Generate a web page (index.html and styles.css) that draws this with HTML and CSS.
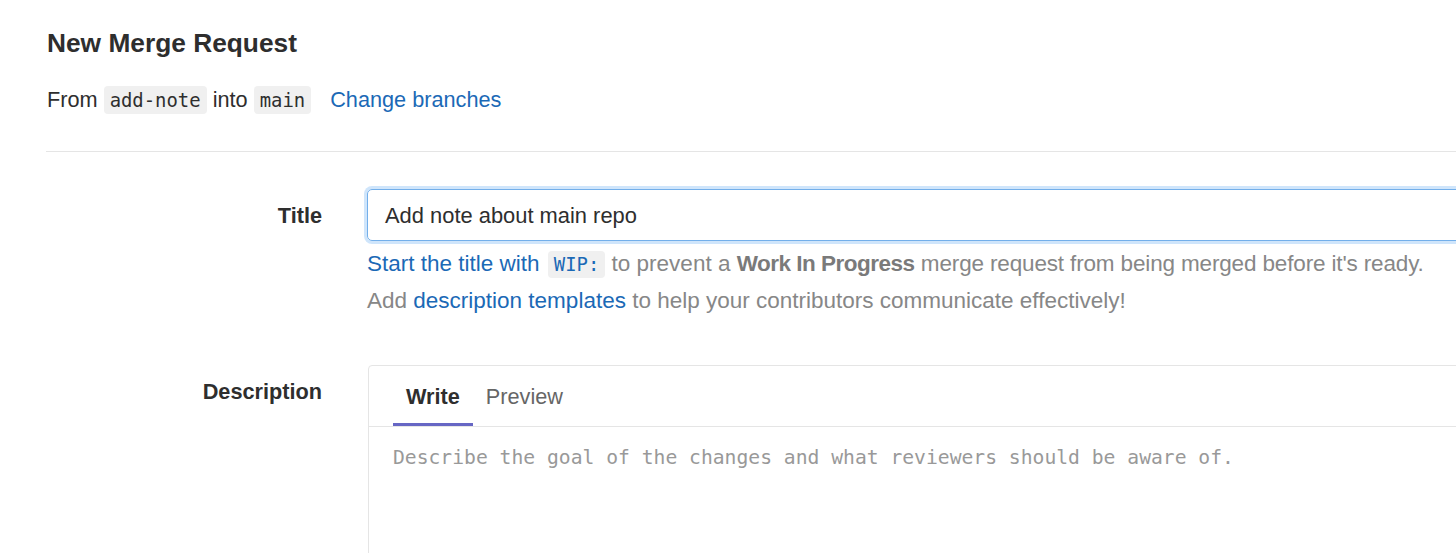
FILE: index.html
```html
<!DOCTYPE html>
<html lang="en">
<head>
<meta charset="utf-8">
<title>New Merge Request</title>
<link rel="stylesheet" href="styles.css">
</head>
<body>
<div class="page">
  <h3 class="page-title">New Merge Request</h3>
  <div class="branch-info">From <code class="chip">add-note</code> into <code class="chip">main</code> <a class="change-link" href="#">Change branches</a></div>
  <hr class="divider">
  <div class="form">
    <div class="form-row">
      <div class="label label-title">Title</div>
      <div class="field">
        <div class="text-input">Add note about main repo</div>
        <div class="help">
          <div class="help-line"><a class="link" href="#">Start the title with <code class="chip chip-blue">WIP:</code></a> to prevent a <strong>Work In Progress</strong> <span class="tail">merge request from being merged before it's ready.</span></div>
          <div class="help-line">Add <a class="link" href="#">description templates</a> to help your contributors communicate effectively!</div>
        </div>
      </div>
    </div>
    <div class="form-row row-desc">
      <div class="label label-desc">Description</div>
      <div class="field">
        <div class="md-box">
          <div class="tabs">
            <a class="tab active" href="#">Write</a>
            <a class="tab" href="#">Preview</a>
          </div>
          <div class="md-area"><span class="placeholder">Describe the goal of the changes and what reviewers should be aware of.</span></div>
        </div>
      </div>
    </div>
  </div>
</div>
</body>
</html>
```

FILE: styles.css
```css
html, body {
  margin: 0;
  padding: 0;
  background: #fff;
  overflow: hidden;
}
body {
  font-family: "Liberation Sans", Arial, sans-serif;
  font-size: 21.7px;
  color: #2e2e2e;
}
.page {
  width: 1800px;
  padding-left: 46px;
}
.page-title {
  margin: 0;
  padding-top: 27px;
  font-size: 26.3px;
  line-height: 32px;
  font-weight: 700;
  color: #2e2e2e;
  padding-left: 1px;
}
.branch-info {
  margin-top: 27px;
  height: 28px;
  line-height: 28px;
  padding-left: 1px;
}
.chip {
  display: inline-block;
  font-family: "DejaVu Sans Mono", "Liberation Mono", monospace;
  font-size: 18.9px;
  line-height: 28px;
  padding: 0 6px;
  background: #f0f0f0;
  border-radius: 4px;
  color: #2e2e2e;
}
.change-link {
  margin-left: 13px;
  color: #1b69b6;
  text-decoration: none;
}
.divider {
  margin: 37px 0 0;
  border: 0;
  border-top: 1px solid #e5e5e5;
  height: 0;
}
.form {
  padding-top: 37px;
}
.form-row {
  display: grid;
  grid-template-columns: 276px 1fr;
  column-gap: 45px;
}
.row-desc {
  margin-top: 46px;
}
.label {
  text-align: right;
  font-weight: 700;
}
.label-title {
  line-height: 52px;
  padding-top: 1px;
}
.label-desc {
  line-height: 30px;
  margin-top: 12px;
}
.text-input {
  box-sizing: border-box;
  height: 52px;
  line-height: 52px;
  border: 1px solid #73afea;
  border-radius: 5px;
  box-shadow: 0 0 0 3px #cfe5fb;
  padding-left: 17px;
  font-size: 21.9px;
  color: #2e2e2e;
}
.help {
  margin-top: 4px;
  font-size: 22.5px;
  color: #878787;
}
.help-line {
  height: 37px;
  line-height: 37px;
}
.help strong {
  color: #7a7a7a;
  letter-spacing: -0.5px;
}
.tail {
  letter-spacing: -0.15px;
}
.link {
  color: #1b69b6;
  text-decoration: none;
}
.chip-blue {
  color: #1b69b6;
  font-size: 18.9px;
  line-height: 27px;
  margin-left: 2px;
  letter-spacing: 0;
}
.md-box {
  margin-left: 1px;
  border: 1px solid #e5e5e5;
  border-radius: 4px;
  min-height: 260px;
}
.tabs {
  display: flex;
  padding: 0 24px;
  border-bottom: 1px solid #e5e5e5;
}
.tab {
  padding: 16px 13px 11px;
  line-height: 30px;
  color: #666;
  text-decoration: none;
  border-bottom: 3px solid transparent;
}
.tab.active {
  color: #2e2e2e;
  font-weight: 700;
  border-bottom-color: #6666c4;
}
.md-area {
  padding: 16px 24px 0;
  line-height: 28px;
}
.placeholder {
  font-family: "DejaVu Sans Mono", "Liberation Mono", monospace;
  font-size: 19.68px;
  color: #999;
}
```
